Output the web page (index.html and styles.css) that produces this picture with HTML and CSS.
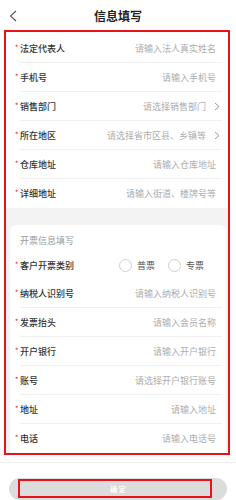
FILE: index.html
```html
<!DOCTYPE html>
<html lang="zh-CN">
<head>
    <meta charset="UTF-8">
    <meta name="viewport" content="width=device-width, initial-scale=1.0">
    <title>信息填写</title>
    <link rel="stylesheet" href="styles.css">
</head>
<body>
    <header class="topbar">
        <a class="back" href="#">
            <svg width="8" height="12" viewBox="0 0 8 12"><path d="M7 1 L1.5 6 L7 11" fill="none" stroke="#555" stroke-width="1.1"/></svg>
        </a>
        <h1>信息填写</h1>
    </header>

    <main class="form-box">
        <section class="card card-base">
            <div class="row"><span class="label"><i class="req">*</i>法定代表人</span><span class="hint">请输入法人真实姓名</span></div>
            <div class="row"><span class="label"><i class="req">*</i>手机号</span><span class="hint">请输入手机号</span></div>
            <div class="row"><span class="label"><i class="req">*</i>销售部门</span><span class="hint">请选择销售部门</span><span class="arrow"><svg width="6" height="9" viewBox="0 0 6 9"><path d="M1 1 L5 4.5 L1 8" fill="none" stroke="#999" stroke-width="1"/></svg></span></div>
            <div class="row"><span class="label"><i class="req">*</i>所在地区</span><span class="hint">请选择省市区县、乡镇等</span><span class="arrow"><svg width="6" height="9" viewBox="0 0 6 9"><path d="M1 1 L5 4.5 L1 8" fill="none" stroke="#999" stroke-width="1"/></svg></span></div>
            <div class="row"><span class="label"><i class="req">*</i>仓库地址</span><span class="hint">请输入仓库地址</span></div>
            <div class="row last"><span class="label"><i class="req">*</i>详细地址</span><span class="hint">请输入街道、楼牌号等</span></div>
        </section>

        <section class="card card-invoice">
            <h2>开票信息填写</h2>
            <div class="row radio-row">
                <span class="label"><i class="req">*</i>客户开票类别</span>
                <span class="radios">
                    <span class="radio"><span class="circle"></span>普票</span>
                    <span class="radio"><span class="circle"></span>专票</span>
                </span>
            </div>
            <div class="row"><span class="label"><i class="req">*</i>纳税人识别号</span><span class="hint">请输入纳税人识别号</span></div>
            <div class="row"><span class="label"><i class="req">*</i>发票抬头</span><span class="hint">请输入会员名称</span></div>
            <div class="row"><span class="label"><i class="req">*</i>开户银行</span><span class="hint">请输入开户银行</span></div>
            <div class="row"><span class="label"><i class="req">*</i>账号</span><span class="hint">请选择开户银行账号</span></div>
            <div class="row"><span class="label"><i class="req">*</i>地址</span><span class="hint">请输入地址</span></div>
            <div class="row last"><span class="label"><i class="req">*</i>电话</span><span class="hint">请输入电话号</span></div>
        </section>
    </main>

    <footer class="bottom">
        <button class="submit">确 定<span class="mark"></span></button>
    </footer>
</body>
</html>
```

FILE: styles.css
```css
* {
    margin: 0;
    padding: 0;
    box-sizing: border-box;
}

body {
    font-family: "Noto Sans CJK SC", "Noto Sans", sans-serif;
    background-color: #fff;
    color: #333;
    width: 236px;
}

.topbar {
    height: 30px;
    display: flex;
    align-items: center;
    justify-content: center;
    position: relative;
}

.topbar h1 {
    font-size: 12px;
    font-weight: bold;
    color: #222;
    line-height: 1;
    margin-top: 1px;
}

.back {
    position: absolute;
    left: 9px;
    top: 10px;
    display: flex;
}

.form-box {
    margin: 0 6px 0 4px;
    border: 2px solid #e8121a;
    background-color: #f3f3f3;
}

.card {
    background-color: #fff;
}

.card-base {
    padding-top: 2px;
    margin-bottom: 17px;
}

.card-invoice {
    margin: 0 2px 0 4px;
    border-radius: 6px 6px 0 0;
}

.card-invoice h2 {
    font-size: 9px;
    font-weight: normal;
    color: #9a9a9a;
    line-height: 12px;
    padding: 10px 0 4px 10px;
}

.row {
    height: 29px;
    display: flex;
    align-items: center;
    margin: 0 6px 0 14px;
    border-bottom: 1px solid #f0f0f0;
    font-size: 9px;
}

.card-invoice .row {
    margin: 0 4px 0 10px;
}

.row.last {
    border-bottom: none;
}

.label {
    color: #333;
    font-weight: 500;
    white-space: nowrap;
}

.req {
    font-style: normal;
    color: #e8323c;
    font-size: 7px;
    display: inline-block;
    width: 5px;
    margin-left: -5px;
    vertical-align: 2px;
}

.hint {
    margin-left: auto;
    color: #adadad;
    padding-right: 6px;
    white-space: nowrap;
}

.arrow {
    display: flex;
    margin-left: 1px;
    margin-right: 2px;
}

.row .hint + .arrow {
    margin-left: 8px;
}

.row:has(.arrow) .hint {
    padding-right: 0;
}

.radio-row {
    height: 28px;
    border-bottom: none;
    margin-bottom: 4px;
}

.radios {
    margin-left: auto;
    display: flex;
    gap: 13px;
    padding-right: 18px;
}

.radio {
    display: flex;
    align-items: center;
    gap: 5px;
    color: #555;
}

.circle {
    width: 13px;
    height: 13px;
    border: 1px solid #cfcfcf;
    border-radius: 50%;
}

.bottom {
    margin-top: 7px;
    border-top: 1px solid #f2f2f2;
    padding: 10px 9px 0 9px;
}

.submit {
    width: 100%;
    height: 22px;
    border: none;
    border-radius: 11px;
    background-color: #dcdcdc;
    color: #fff;
    font-family: "Noto Sans CJK SC", sans-serif;
    font-size: 7px;
    font-weight: bold;
    position: relative;
}

.mark {
    position: absolute;
    left: 9px;
    right: 15px;
    top: 1px;
    bottom: 2px;
    border: 2px solid #e8121a;
}
```
